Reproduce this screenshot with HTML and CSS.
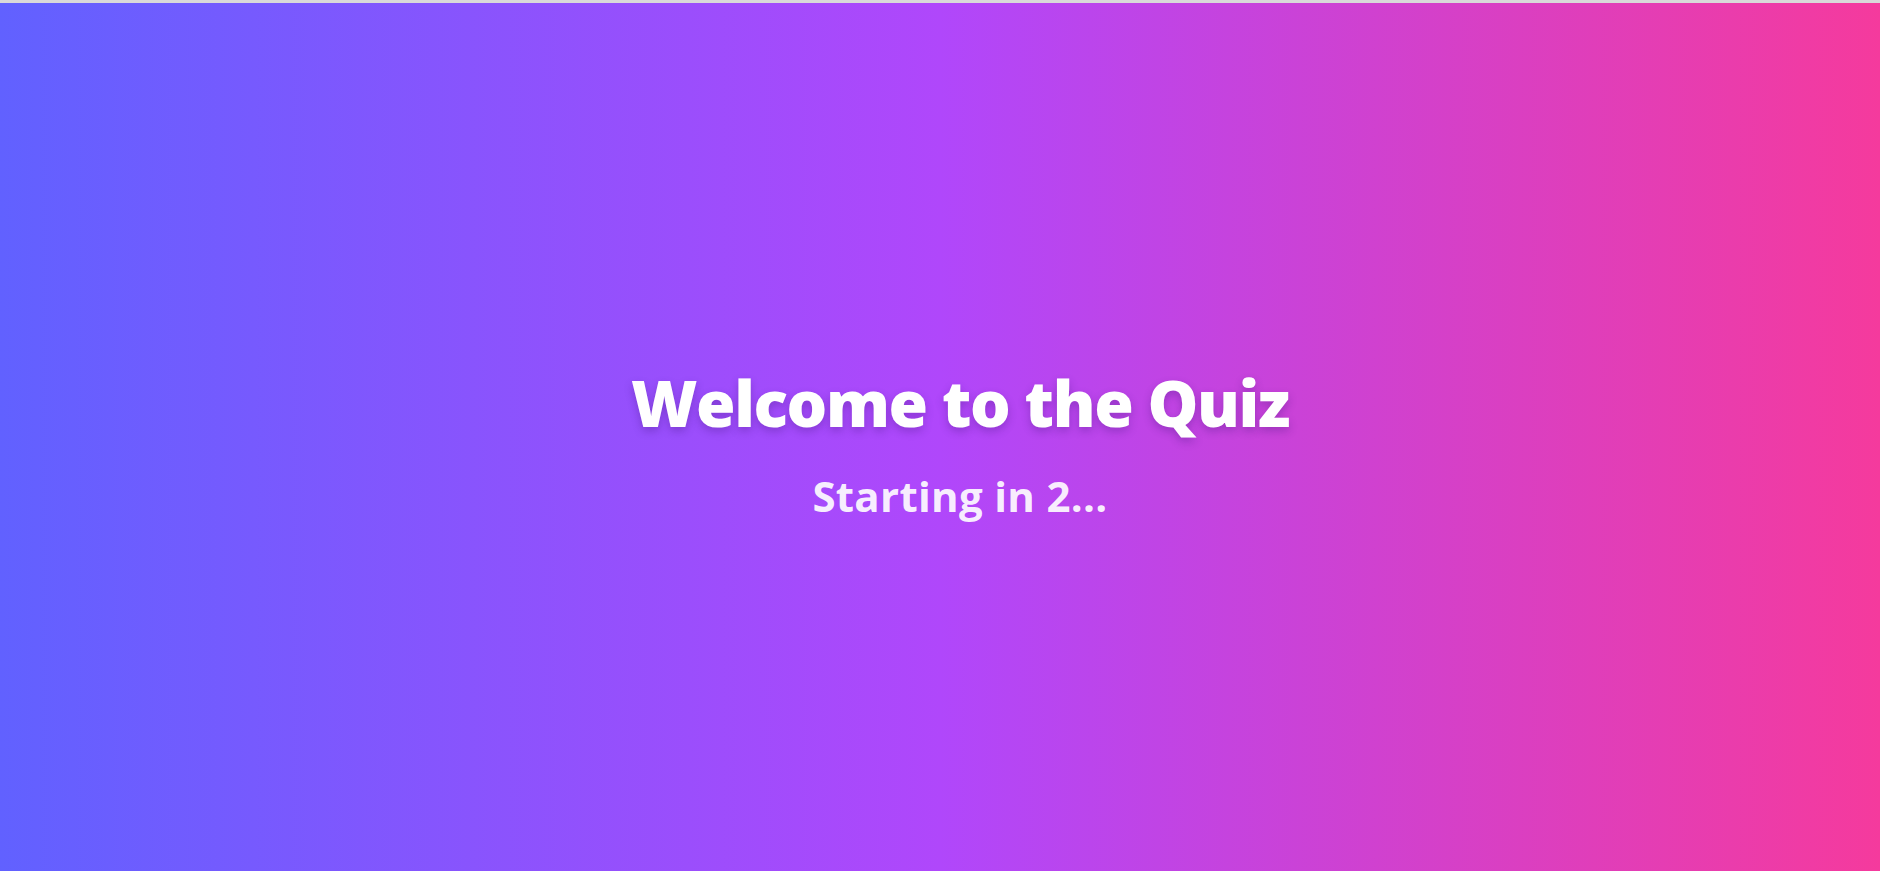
FILE: index.html
```html
<!DOCTYPE html>
<html lang="en">
<head>
<meta charset="utf-8">
<title>Quiz</title>
<link rel="stylesheet" href="styles.css">
</head>
<body>
<div class="topbar"></div>
<main class="screen">
  <div class="intro">
    <h1 class="title">Welcome to the Quiz</h1>
    <p class="countdown">Starting in 2...</p>
  </div>
</main>
</body>
</html>
```
FILE: styles.css
```css
html, body {
  margin: 0;
  padding: 0;
  height: 100%;
}
body {
  display: flex;
  flex-direction: column;
  font-family: "Open Sans", "Noto Sans", sans-serif;
  overflow: hidden;
}
.topbar {
  height: 3px;
  background: #d9d9d9;
  flex: none;
}
.screen {
  flex: 1;
  display: flex;
  align-items: center;
  justify-content: center;
  padding: 12px 0 0 40px;
  background: linear-gradient(90deg, #6161ff 0%, #b047fb 50%, #f53a9d 100%);
}
.intro {
  text-align: center;
  color: #fff;
}
.title {
  margin: 0;
  font-size: 64px;
  font-weight: 800;
  line-height: 1.2;
  letter-spacing: -1.4px;
  text-shadow: 0 4px 8px rgba(60, 20, 120, 0.3);
}
.countdown {
  margin: 29px 0 0;
  font-size: 42px;
  font-weight: 700;
  line-height: 1.2;
  letter-spacing: 0.3px;
  color: rgba(255, 255, 255, 0.92);
}
```
